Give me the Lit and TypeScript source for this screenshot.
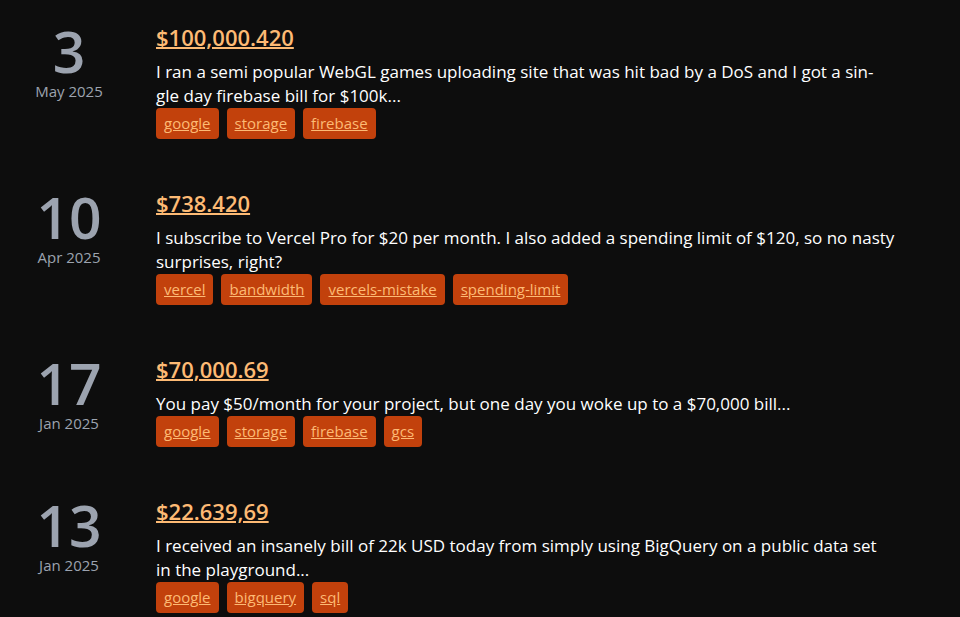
import { LitElement, html, css } from "lit";
import { customElement, property } from "lit/decorators.js";

interface Entry {
  day: string;
  month: string;
  iso: string;
  amount: string;
  summary: string;
  tags: string[];
}

// Line breaks inside a summary are kept when it is drawn.
const ENTRIES: Entry[] = [
  {
    day: "3",
    month: "May 2025",
    iso: "2025-05-03",
    amount: "$100,000.420",
    summary:
      "I ran a semi popular WebGL games uploading site that was hit bad by a DoS and I got a sin-\ngle day firebase bill for $100k...",
    tags: ["google", "storage", "firebase"],
  },
  {
    day: "10",
    month: "Apr 2025",
    iso: "2025-04-10",
    amount: "$738.420",
    summary:
      "I subscribe to Vercel Pro for $20 per month. I also added a spending limit of $120, so no nasty surprises, right?",
    tags: ["vercel", "bandwidth", "vercels-mistake", "spending-limit"],
  },
  {
    day: "17",
    month: "Jan 2025",
    iso: "2025-01-17",
    amount: "$70,000.69",
    summary: "You pay $50/month for your project, but one day you woke up to a $70,000 bill...",
    tags: ["google", "storage", "firebase", "gcs"],
  },
  {
    day: "13",
    month: "Jan 2025",
    iso: "2025-01-13",
    amount: "$22.639,69",
    summary:
      "I received an insanely bill of 22k USD today from simply using BigQuery on a public data set\nin the playground...",
    tags: ["google", "bigquery", "sql"],
  },
];

@customElement("bill-entry")
export class BillEntry extends LitElement {
  @property({ attribute: false }) entry!: Entry;

  static styles = css`
    :host {
      display: block;
    }
    .entry {
      display: grid;
      grid-template-columns: 138px 1fr;
    }
    .date {
      display: flex;
      flex-direction: column;
      align-items: center;
      color: #9ca3af;
    }
    .day {
      font-size: 57px;
      line-height: 60px;
      font-weight: 600;
    }
    .month {
      font-size: 15px;
      line-height: 20px;
    }
    .content {
      padding-left: 18px;
    }
    .title {
      margin: 0 0 7px;
      font-size: 22px;
      line-height: 32px;
      font-weight: 600;
    }
    .title a {
      color: #fdba74;
      text-decoration-thickness: 2px;
    }
    .summary {
      margin: 0;
      font-size: 17px;
      line-height: 24px;
      color: #fff;
      white-space: pre-line;
    }
    .tags {
      display: flex;
      flex-wrap: wrap;
      gap: 8px;
      margin: 0;
      padding: 0;
      list-style: none;
    }
    .tag {
      display: block;
      padding: 4px 8px;
      border-radius: 4px;
      background: #c2410c;
      color: #fdba74;
      font-size: 15px;
      line-height: 23px;
    }
  `;

  render() {
    const e = this.entry;
    return html`
      <article class="entry">
        <time class="date" datetime=${e.iso}>
          <span class="day">${e.day}</span>
          <span class="month">${e.month}</span>
        </time>
        <div class="content">
          <h2 class="title"><a href="#">${e.amount}</a></h2>
          <p class="summary">${e.summary}</p>
          <ul class="tags">
            ${e.tags.map((t) => html`<li><a class="tag" href="#">${t}</a></li>`)}
          </ul>
        </div>
      </article>
    `;
  }
}

@customElement("app-root")
export class AppRoot extends LitElement {
  static styles = css`
    :host {
      display: block;
      min-height: 100vh;
      box-sizing: border-box;
      background: #0d0d0d;
      font-family: "Open Sans", "Noto Sans", sans-serif;
    }
    .list {
      display: flex;
      flex-direction: column;
      gap: 48px;
      padding: 21px 60px 4px 0;
    }
  `;

  render() {
    return html`<main class="list">
      ${ENTRIES.map((e) => html`<bill-entry .entry=${e}></bill-entry>`)}
    </main>`;
  }
}
